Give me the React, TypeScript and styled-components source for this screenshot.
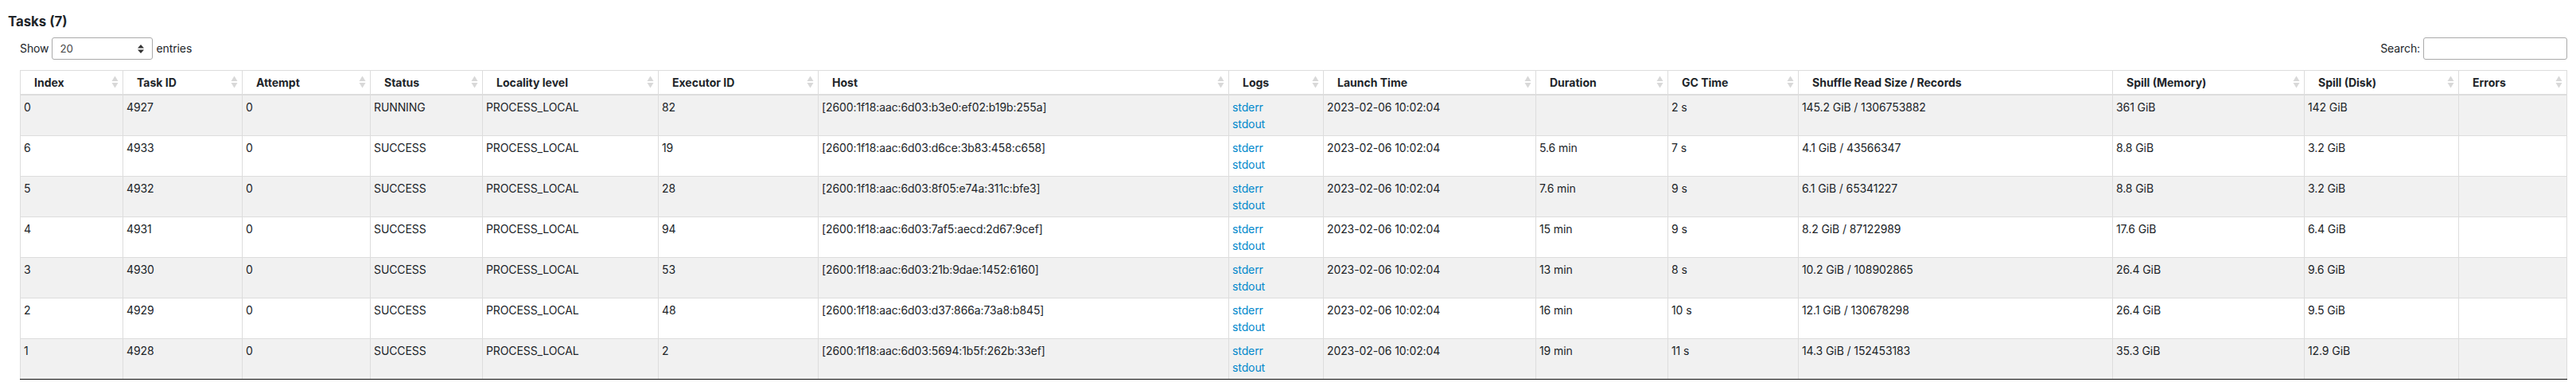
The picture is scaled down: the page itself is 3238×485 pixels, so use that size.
import * as React from 'react';
import styled, { createGlobalStyle } from 'styled-components';

const COLUMNS = [
  { label: 'Index', width: 129, sortable: true },
  { label: 'Task ID', width: 150, sortable: true },
  { label: 'Attempt', width: 161, sortable: true },
  { label: 'Status', width: 141, sortable: true },
  { label: 'Locality level', width: 221, sortable: true },
  { label: 'Executor ID', width: 201, sortable: true },
  { label: 'Host', width: 516, sortable: true },
  { label: 'Logs', width: 119, sortable: true },
  { label: 'Launch Time', width: 267, sortable: true },
  { label: 'Duration', width: 166, sortable: true },
  { label: 'GC Time', width: 164, sortable: true },
  { label: 'Shuffle Read Size / Records', width: 395, sortable: false },
  { label: 'Spill (Memory)', width: 241, sortable: true },
  { label: 'Spill (Disk)', width: 194, sortable: true },
  { label: 'Errors', width: 136, sortable: true },
];

const TASKS = [
  ['0', '4927', 'RUNNING', '82', '[2600:1f18:aac:6d03:b3e0:ef02:b19b:255a]', '', '2 s', '145.2 GiB / 1306753882', '361 GiB', '142 GiB'],
  ['6', '4933', 'SUCCESS', '19', '[2600:1f18:aac:6d03:d6ce:3b83:458:c658]', '5.6 min', '7 s', '4.1 GiB / 43566347', '8.8 GiB', '3.2 GiB'],
  ['5', '4932', 'SUCCESS', '28', '[2600:1f18:aac:6d03:8f05:e74a:311c:bfe3]', '7.6 min', '9 s', '6.1 GiB / 65341227', '8.8 GiB', '3.2 GiB'],
  ['4', '4931', 'SUCCESS', '94', '[2600:1f18:aac:6d03:7af5:aecd:2d67:9cef]', '15 min', '9 s', '8.2 GiB / 87122989', '17.6 GiB', '6.4 GiB'],
  ['3', '4930', 'SUCCESS', '53', '[2600:1f18:aac:6d03:21b:9dae:1452:6160]', '13 min', '8 s', '10.2 GiB / 108902865', '26.4 GiB', '9.6 GiB'],
  ['2', '4929', 'SUCCESS', '48', '[2600:1f18:aac:6d03:d37:866a:73a8:b845]', '16 min', '10 s', '12.1 GiB / 130678298', '26.4 GiB', '9.5 GiB'],
  ['1', '4928', 'SUCCESS', '2', '[2600:1f18:aac:6d03:5694:1b5f:262b:33ef]', '19 min', '11 s', '14.3 GiB / 152453183', '35.3 GiB', '12.9 GiB'],
];

const GlobalStyle = createGlobalStyle`
  html, body {
    margin: 0;
    padding: 0;
    background: #fff;
  }
  body {
    font-family: Inter, "Liberation Sans", sans-serif;
    font-size: 14px;
    line-height: 21px;
    letter-spacing: -0.1px;
    color: #212529;
  }
`;

const Page = styled.div`
  width: 3238px;
  height: 485px;
  box-sizing: border-box;
  padding: 15px 11px 0 10px;
  overflow: hidden;
`;

const Title = styled.h4`
  margin: 0;
  font-size: 16.8px;
  line-height: 24px;
  font-weight: 700;
  letter-spacing: 0;
`;

const Controls = styled.div`
  display: flex;
  align-items: center;
  justify-content: space-between;
  height: 27px;
  margin-top: 8px;
  padding-left: 15px;
`;

const ControlLabel = styled.label`
  display: flex;
  align-items: center;
  gap: 4px;
`;

const SelectBox = styled.div`
  box-sizing: border-box;
  display: flex;
  align-items: center;
  justify-content: space-between;
  width: 127px;
  height: 28px;
  padding: 2px 10px 0 9px;
  border: 1px solid #aaa;
  border-radius: 3px;
  font-size: 13.3px;
  color: #444;
`;

const SearchInput = styled.input`
  box-sizing: border-box;
  width: 181px;
  height: 28px;
  padding: 0 4px;
  border: 1px solid #aaa;
  border-radius: 3px;
  background: #fff;
`;

const Table = styled.table`
  table-layout: fixed;
  border-collapse: collapse;
  width: 3202px;
  margin: 14px 0 0 15px;
`;

const HeadCell = styled.th`
  height: 30px;
  box-sizing: border-box;
  padding: 0;
  border: 1px solid #ddd;
  border-bottom-width: 2px;
  background: #fff;
  text-align: left;
  font-weight: 700;
  letter-spacing: 0;
`;

const HeadInner = styled.div`
  display: flex;
  align-items: center;
  justify-content: space-between;
  padding: 0 5px 0 17px;
`;

const Row = styled.tr<{ $striped: boolean }>`
  background: ${(p) => (p.$striped ? '#f1f1f1' : '#fff')};
`;

const Cell = styled.td`
  box-sizing: border-box;
  height: 51px;
  padding: 4px 4px;
  border: 1px solid #ddd;
  vertical-align: top;
  white-space: nowrap;
`;

const LastRowCell = styled(Cell)`
  border-bottom: 1px solid #111;
`;

const LogLink = styled.a`
  display: block;
  color: #0088cc;
  text-decoration: none;
`;

const SortArrows = () => (
  <svg width="9" height="16" viewBox="0 0 9 16" fill="#d8d8d8">
    <path d="M4.5 0.5 L8.5 7 H0.5 Z" />
    <path d="M0.5 9 H8.5 L4.5 15.5 Z" />
  </svg>
);

const SelectArrows = () => (
  <svg width="8" height="11" viewBox="0 0 8 11" fill="#333">
    <path d="M4 0 L8 4.5 H0 Z" />
    <path d="M0 6.5 H8 L4 11 Z" />
  </svg>
);

const App = () => {
  const renderCells = (task: string[], CellType: typeof Cell) => (
    <>
      <CellType>{task[0]}</CellType>
      <CellType>{task[1]}</CellType>
      <CellType>0</CellType>
      <CellType>{task[2]}</CellType>
      <CellType>PROCESS_LOCAL</CellType>
      <CellType>{task[3]}</CellType>
      <CellType>{task[4]}</CellType>
      <CellType>
        <LogLink href="#">stderr</LogLink>
        <LogLink href="#">stdout</LogLink>
      </CellType>
      <CellType>2023-02-06 10:02:04</CellType>
      <CellType>{task[5]}</CellType>
      <CellType>{task[6]}</CellType>
      <CellType>{task[7]}</CellType>
      <CellType>{task[8]}</CellType>
      <CellType>{task[9]}</CellType>
      <CellType />
    </>
  );

  return (
    <Page>
      <GlobalStyle />
      <Title>Tasks (7)</Title>
      <Controls>
        <ControlLabel>
          Show
          <SelectBox>
            20
            <SelectArrows />
          </SelectBox>
          entries
        </ControlLabel>
        <ControlLabel>
          Search:
          <SearchInput type="search" />
        </ControlLabel>
      </Controls>
      <Table>
        <colgroup>
          {COLUMNS.map((c) => (
            <col key={c.label} width={c.width} />
          ))}
        </colgroup>
        <thead>
          <tr>
            {COLUMNS.map((c) => (
              <HeadCell key={c.label}>
                <HeadInner>
                  {c.label}
                  {c.sortable && <SortArrows />}
                </HeadInner>
              </HeadCell>
            ))}
          </tr>
        </thead>
        <tbody>
          {TASKS.map((task, i) => (
            <Row key={task[1]} $striped={i % 2 === 0}>
              {renderCells(task, i === TASKS.length - 1 ? LastRowCell : Cell)}
            </Row>
          ))}
        </tbody>
      </Table>
    </Page>
  );
};

export default App;
